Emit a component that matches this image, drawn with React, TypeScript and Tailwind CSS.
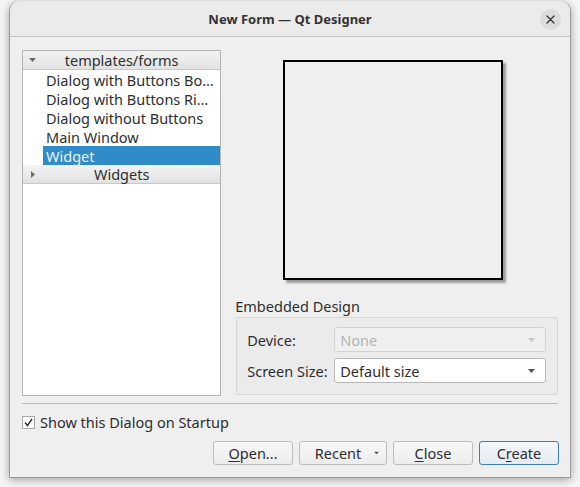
import React from "react";

const font = { fontFamily: '"Noto Sans", "Open Sans", sans-serif' };

function DownTri({ className = "" }: { className?: string }) {
  return (
    <svg width="7" height="4" viewBox="0 0 7 4" className={className}>
      <path d="M0 0 L7 0 L3.5 4 Z" fill="currentColor" />
    </svg>
  );
}

function RightTri({ className = "" }: { className?: string }) {
  return (
    <svg width="4" height="7" viewBox="0 0 4 7" className={className}>
      <path d="M0 0 L4 3.5 L0 7 Z" fill="currentColor" />
    </svg>
  );
}

function Header({ label, open }: { label: string; open: boolean }) {
  return (
    <div className="relative h-[19px] flex items-center justify-center bg-gradient-to-b from-[#f3f3f3] to-[#e2e2e2] border-b border-[#c8c8c8] text-[#2e2e2e]">
      <span className="absolute left-[6px] top-0 h-full flex items-center text-[#6a6a6a]">
        {open ? <DownTri /> : <RightTri className="ml-[2px]" />}
      </span>
      <span>{label}</span>
    </div>
  );
}

function Item({ label, selected }: { label: string; selected?: boolean }) {
  return (
    <div className="h-[19px] flex items-center pl-[20px]">
      <div
        className={
          selected
            ? "flex-1 h-full flex items-center pl-[3px] bg-[#308cc6] text-[#eaf2fa]"
            : "flex-1 h-full flex items-center pl-[3px] text-[#2e2e2e]"
        }
      >
        <span className="whitespace-nowrap">{label}</span>
      </div>
    </div>
  );
}

function Button({
  children,
  width,
  primary,
}: {
  children: React.ReactNode;
  width: string;
  primary?: boolean;
}) {
  return (
    <div
      className={
        (primary
          ? "border-[#3b82bd] bg-gradient-to-b from-[#f4f7fa] to-[#e4ebf1] "
          : "border-[#bdbdbd] bg-gradient-to-b from-[#f8f8f8] to-[#ececec] ") +
        width +
        " relative h-[24px] border rounded-[3px] flex items-center justify-center text-[#2e2e2e]"
      }
    >
      {children}
    </div>
  );
}

export default function App() {
  return (
    <div
      className="w-[580px] h-[487px] bg-[#f6f6f6] overflow-hidden text-[14.5px] leading-[20px]"
      style={font}
    >
      <div className="ml-[9px] mt-[1px] w-[562px] h-[477px] bg-[#efefef] rounded-t-[10px] border-x border-b border-[#9a9a9a] shadow-[0_2px_10px_rgba(0,0,0,0.35)] flex flex-col">
        {/* title bar */}
        <div className="relative h-[36px] shrink-0 rounded-t-[10px] bg-[#ebebeb] border-b border-[#c4c4c4] flex items-center justify-center">
          <span className="font-bold text-[13px] text-[#333333] pt-[1px]">
            New Form — Qt Designer
          </span>
          <div className="absolute right-[9px] top-[8px] w-[21px] h-[21px] rounded-full bg-[#dcdcdc] flex items-center justify-center">
            <svg width="9" height="9" viewBox="0 0 9 9">
              <path
                d="M1 1 L8 8 M8 1 L1 8"
                stroke="#333"
                strokeWidth="1.3"
                strokeLinecap="round"
              />
            </svg>
          </div>
        </div>

        {/* body */}
        <div className="flex-1 flex flex-col px-[12px] pt-[13px]">
          <div className="flex gap-[7px]">
            {/* template tree */}
            <div className="w-[200px] h-[346px] bg-white border border-[#b4b4b4]">
              <Header label="templates/forms" open />
              <Item label="Dialog with Buttons Bo…" />
              <Item label="Dialog with Buttons Ri…" />
              <Item label="Dialog without Buttons" />
              <Item label="Main Window" />
              <Item label="Widget" selected />
              <Header label="Widgets" open={false} />
            </div>

            {/* preview and options */}
            <div className="w-[331px] flex flex-col">
              <div className="h-[246px] flex justify-center pt-[10px]">
                <div className="w-[220px] h-[220px] border-2 border-black bg-[#efefef] shadow-[3px_3px_2px_rgba(0,0,0,0.35)]" />
              </div>
              <div className="pl-[7px] text-[#2e2e2e] h-[20px] flex items-center">
                Embedded Design
              </div>
              <div className="ml-[8px] mt-[1px] h-[78px] border border-[#d6d6d6] rounded-[2px] bg-[#ebebeb] pl-[10px] pr-[11px] pt-[9px] flex flex-col gap-[6px]">
                <div className="flex items-center">
                  <span className="w-[87px] text-[#2e2e2e]">Device:</span>
                  <div className="flex-1 h-[25px] border border-[#d2d2d2] rounded-[3px] bg-[#efefef] flex items-center justify-between pl-[5px] pr-[10px] text-[#b4b4b4]">
                    <span>None</span>
                    <DownTri className="text-[#c4c4c4]" />
                  </div>
                </div>
                <div className="flex items-center">
                  <span className="w-[87px] text-[#2e2e2e]">Screen Size:</span>
                  <div className="flex-1 h-[25px] border border-[#b8b8b8] rounded-[3px] bg-white flex items-center justify-between pl-[5px] pr-[10px] text-[#2e2e2e]">
                    <span>Default size</span>
                    <DownTri className="text-[#555555]" />
                  </div>
                </div>
              </div>
            </div>
          </div>

          {/* separator */}
          <div className="mt-[7px] h-px bg-[#b8b8b8]" />

          {/* startup checkbox */}
          <div className="mt-[8px] h-[20px] flex items-center gap-[5px] text-[#2e2e2e]">
            <div className="w-[13px] h-[13px] border border-[#a8a8a8] bg-white flex items-center justify-center">
              <svg width="9" height="9" viewBox="0 0 9 9">
                <path d="M1 4.5 L3.5 7.5 L8 1" stroke="#2e2e2e" strokeWidth="1.4" fill="none" />
              </svg>
            </div>
            <span>Show this Dialog on Startup</span>
          </div>

          {/* buttons */}
          <div className="mt-[9px] flex justify-end gap-[6px] -mr-px">
            <Button width="w-[80px]">
              <span>
                <span className="underline underline-offset-2">O</span>pen...
              </span>
            </Button>
            <Button width="w-[88px]">
              <span className="mr-[10px]">Recent</span>
              <DownTri className="absolute right-[6px] top-[9px] scale-75 text-[#555555]" />
            </Button>
            <Button width="w-[80px]">
              <span>
                <span className="underline underline-offset-2">C</span>lose
              </span>
            </Button>
            <Button width="w-[80px]" primary>
              <span>
                C<span className="underline underline-offset-2">r</span>eate
              </span>
            </Button>
          </div>
        </div>
      </div>
    </div>
  );
}
